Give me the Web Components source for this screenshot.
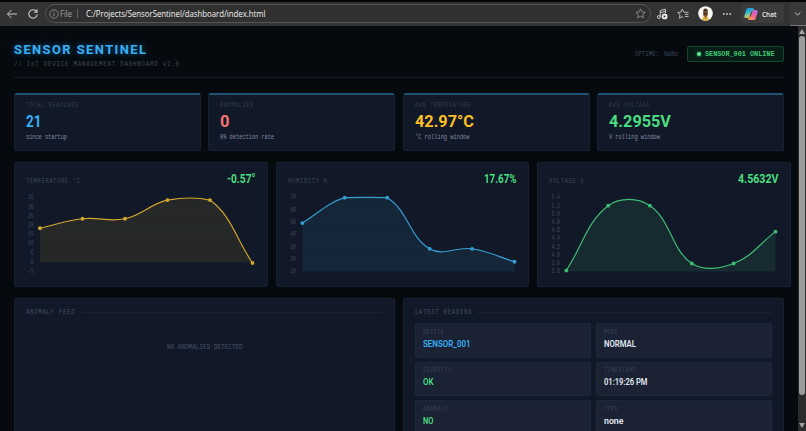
<!DOCTYPE html>
<html lang="en">
<head>
<meta charset="utf-8">
<title>Sensor Sentinel</title>
<style>
  html, body { margin:0; height:100%; overflow:hidden; background:#060a0f; }
  sensor-app {
    --cyan:#38b0f5; --red:#f87171; --amber:#fbbf24; --green:#4ade80;
    --card:#111827; --line:#152331; --cell:#1a2234;
    --mono:"Liberation Mono", monospace;
    --display:Roboto, "Liberation Sans", sans-serif;
  }
</style>
</head>
<body>
<sensor-app></sensor-app>

<script>
const attach = (el, html) => {
  const template = document.createElement('template')
  template.innerHTML = html
  el.attachShadow({mode:'open'}).appendChild(template.content.cloneNode(true))
}

class BrowserBar extends HTMLElement {
  constructor(){
    super()
    attach(this, `
    <style>
    :host{
        display:flex;
        align-items:center;
        box-sizing:border-box;
        height:26px;
        padding-left:6px;
        border-top:2px solid #050505;
        background:#333;
        color:#ddd;
        font-family:"Open Sans","Noto Sans",sans-serif;
        font-size:8.500px;
    }
    svg{ display:block; flex:none; fill:none; stroke:#c9c9c9; }
    .reload{ margin-left:9px; }
    .address{
        display:flex;
        align-items:center;
        box-sizing:border-box;
        width:606px;
        height:19px;
        margin-left:5.5px;
        padding:0 4px 0 3px;
        border:1px solid #555;
        border-radius:10px;
        background:#303030;
    }
    .address, .tools, .chat{ position:relative; top:-.5px; }
    .file{ margin-left:1px; color:#a2a2a2; }
    .sep{ width:1px; height:9px; margin:0 8px 0 5px; background:#666; }
    .url{ color:#f2f2f2; font-size:9px; }
    .star{ margin-left:auto; }
    .tools{ display:flex; align-items:center; gap:9px; margin-left:5px; }
    .chat{
        display:flex;
        align-items:center;
        gap:4px;
        box-sizing:border-box;
        width:43px;
        height:19px;
        margin-left:9px;
        padding-left:3px;
        border-radius:3px;
        background:#3b3b3b;
        color:#eee;
        font-weight:600;
        font-size:7.500px;
    }
    .more{
        display:flex;
        align-items:center;
        box-sizing:border-box;
        width:16px;
        height:24px;
        margin-left:auto;
        padding-left:2.5px;
        background:#3a3a3a;
        border-bottom:1px solid #777;
    }
    </style>
    <svg width="12" height="12" viewBox="0 0 12 12" stroke-width="1"><path d="M11 6H1.5M5.5 2 1.5 6l4 4"/></svg>
    <svg class="reload" width="12" height="12" viewBox="0 0 12 12" stroke-width="1.1"><path d="M9.8 4.1A4.2 4.2 0 1 0 10.2 6.4M10 1.3v3H7"/></svg>
    <div class="address">
        <svg width="10" height="10" viewBox="0 0 10 10" stroke="#999" stroke-width=".8"><circle cx="5" cy="5" r="4.2" stroke="#999"/><path stroke="#aaa" d="M5 4.4v3M5 2.5v.9"/></svg>
        <fit-text class="file" w="12">File</fit-text>
        <span class="sep"></span>
        <fit-text class="url" w="179.5">C:/Projects/SensorSentinel/dashboard/index.html</fit-text>
        <svg class="star" width="11" height="11" viewBox="0 0 12 12" style="stroke:#999" stroke-width=".9"><path d="M6 1l1.5 3.2 3.5.5-2.6 2.4.7 3.6L6 9 2.9 10.7l.7-3.6L1 4.700l3.500-.5z"/></svg>
    </div>
    <div class="tools">
        <svg width="12" height="12" viewBox="0 0 12 12" stroke-width="1"><path d="M4.300 9V2.500L9.500 1.200V5M4.300 4.700l5-1.300"/><circle cx="2.900" cy="9" r="1.500"/><circle cx="8.600" cy="8.400" r="2.900" fill="#eee" stroke="none"/><path d="M7.700 7v2.800L10 8.400z" fill="#333" stroke="none"/></svg>
        <svg width="12" height="12" viewBox="0 0 12 12" stroke-width=".9"><path d="M7 4.300 5.300 1.200 3.900 4.100.8 4.600 3 6.900l-.5 3.300L5.300 8.700l1 .6M7.200 4.300H11.500M8 6.400h3.500M8 8.500h3.500"/></svg>
        <svg width="15" height="15" viewBox="0 0 15 15" stroke="none"><g stroke="none"><circle cx="7.500" cy="7.500" r="7.300" fill="#f8f8f4"/><path d="M4.300 14c.2-2.700 1-4 3.200-4s3 1.300 3.200 4a7.300 7.300 0 0 1-6.400 0z" fill="#e0b53f"/><rect x="5.300" y="2.600" width="4.400" height="8" rx="2.200" fill="#4a2d1c"/><path d="M6.200 5.500h2.600v1.200H6.200z" fill="#8f6847"/><path d="M6.500 8.500h2l-.5 4h-1z" fill="#9a642c"/></g></svg>
        <svg width="10" height="12" viewBox="0 0 10 12"><g fill="#ccc" stroke="none"><circle cx="1.800" cy="6" r=".9"/><circle cx="5" cy="6" r=".9"/><circle cx="8.200" cy="6" r=".9"/></g></svg>
    </div>
    <div class="chat">
        <svg width="14" height="14" viewBox="0 0 14 14">
            <defs>
                <linearGradient id="a" x1="0" y1="0" x2=".3" y2="1"><stop offset="0" stop-color="#1784df"/><stop offset=".5" stop-color="#36b8d3"/><stop offset="1" stop-color="#ddd34a"/></linearGradient>
                <linearGradient id="b" x1="1" y1="0" x2=".3" y2="1"><stop offset="0" stop-color="#a86cf4"/><stop offset=".55" stop-color="#ee5e9b"/><stop offset="1" stop-color="#ff994e"/></linearGradient>
            </defs>
            <g stroke="none">
                <path d="M4 1h4.500c1 0 1.400.6 1.700 1.500L7.300 4.700 5.600 9.600C5.200 10.700 4.800 11 3.500 11H2C.5 11 0 10 .4 8.700L2.300 2.500C2.600 1.500 3.100 1 4 1z" fill="url(#a)"/>
                <path d="M10 13H5.500c-1 0-1.400-.6-1.700-1.500l2.900-2.200 1.700-4.900C8.800 3.300 9.200 3 10.500 3H12c1.500 0 2 1 1.600 2.300l-1.900 6.200C11.400 12.500 10.900 13 10 13z" fill="url(#b)"/>
            </g>
        </svg>
        <fit-text w="14.500">Chat</fit-text>
    </div>
    <div class="more"><svg width="9" height="9" viewBox="0 0 9 9" stroke-width="1"><path d="M2 3.500 4.700 6l2.700-2.500"/></svg></div>
    `)
  }
}

class ScrollRail extends HTMLElement {
  constructor(){
    super()
    attach(this, `
    <style>
    :host{
        display:flex;
        flex-direction:column;
        align-items:center;
        flex:none;
        box-sizing:border-box;
        width:8px;
        height:100%;
        padding:3px 0;
        background:#2c2c2c;
    }
    svg{ display:block; fill:#a3a3a3; }
    .thumb{ width:5.500px; height:359px; margin:2px 0 auto; border-radius:3px; background:#9d9d9d; }
    </style>
    <svg width="6" height="5"><path d="M3 0 6 5H0z"/></svg>
    <div class="thumb"></div>
    <svg width="6" height="5"><path d="M3 5 6 0H0z"/></svg>
    `)
  }
}

class DashHeader extends HTMLElement {
  constructor(){
    super()
    attach(this, `
    <style>
    :host{
        display:flex;
        justify-content:space-between;
        box-sizing:border-box;
        height:52px;
        padding-top:16px;
        border-bottom:1px solid #111d29;
        font-family:var(--mono);
    }
    .title{
        height:15px;
        font:bold 13.500px/15px var(--display);
        letter-spacing:1.500px;
        color:var(--cyan);
        text-shadow:0 0 7px #1581c8aa;
    }
    .sub{ margin-top:2px; height:10px; line-height:10px; font-size:7.500px; color:#414c59; letter-spacing:1px; }
    .right{ display:flex; align-items:center; height:16px; margin-top:4px; font-size:7.500px; }
    .uptime{ margin-right:5px; color:#38465a; }
    .nan{ margin-right:9px; color:#38465a; }
    .status{
        display:flex;
        align-items:center;
        box-sizing:border-box;
        width:97px;
        height:16px;
        padding-left:8.500px;
        border:1px solid #134628;
        border-radius:2px;
        background:#081c18;
        color:#40c873;
        font-weight:bold;
    }
    .dot{ width:4px; height:4px; margin-right:4.500px; border-radius:50%; background:#5cea91; box-shadow:0 0 3px #22c55e; }
    </style>
    <div>
        <fit-text class="title" w="132">SENSOR SENTINEL</fit-text>
        <fit-text class="sub" w="165">// IoT DEVICE MANAGEMENT DASHBOARD v1.0</fit-text>
    </div>
    <div class="right">
        <fit-text class="uptime" w="24">UPTIME:</fit-text>
        <fit-text class="nan" w="14">NaNs</fit-text>
        <div class="status"><span class="dot"></span><fit-text w="69.500">SENSOR_001 ONLINE</fit-text></div>
    </div>
    `)
  }
}

class StatCard extends HTMLElement {
  constructor(){
    super()
    const a = name => this.getAttribute(name)
    attach(this, `
    <style>
    :host{
        display:flex;
        flex-direction:column;
        box-sizing:border-box;
        height:58px;
        padding:7px 11px 0;
        border:1px solid var(--line);
        border-top:0;
        border-radius:2px;
        background:linear-gradient(#1d5272 1.500px, var(--card) 2px);
        font-family:var(--mono);
        font-size:7px;
    }
    .label{ height:9px; line-height:9px; margin-top:1px; letter-spacing:1px; color:#344153; }
    .value{ height:20px; margin-top:1px; font:bold 17px/20px var(--display); color:var(--${a('tone')}); }
    .note{ height:9px; line-height:9px; margin-top:2px; color:#8190a5; }
    </style>
    <fit-text class="label" w="${a('lw')}">${a('label')}</fit-text>
    <fit-text class="value" w="${a('vw')}">${a('value')}</fit-text>
    <fit-text class="note" w="${a('nw')}">${a('note')}</fit-text>
    `)
  }
}

class LineChart extends HTMLElement {
  constructor(){
    super()
    const a = name => this.getAttribute(name)
    const values = a('values').split(',').map(Number)
    const ticks = a('ticks').split(',')
    const max = Number(ticks[0]), min = Number(ticks[ticks.length - 1])
    const left = Number(a('left')), right = 237.500, top = 7.300, bottom = 81.200
    const y = v => top + (max - v) / (max - min) * (bottom - top)
    const pts = values.map((v, i) => [left + i * (right - left) / (values.length - 1), y(v)])
    const line = this.curve(pts, top, bottom)
    const base = y(Math.max(0, min))
    attach(this, `
    <style>
    :host{
        display:block;
        box-sizing:border-box;
        height:125px;
        border:1px solid var(--line);
        border-radius:2px;
        background:var(--card);
        font-family:var(--mono);
        overflow:hidden;
    }
    .head{
        display:flex;
        justify-content:space-between;
        box-sizing:border-box;
        height:27px;
        padding:6px 11.500px 0 11px;
    }
    .label{ height:10px; line-height:10px; margin-top:6.500px; font-size:7.500px; letter-spacing:1px; color:#3e4a5b; }
    .value{ height:18px; font:bold 12.500px/19px var(--display); color:var(--green); }
    svg{ display:block; }
    text{ font-size:6.500px; fill:#3f4c5f; }
    </style>
    <div class="head">
        <fit-text class="label" w="${a('lw')}">${a('label')}</fit-text>
        <fit-text class="value" w="${a('vw')}">${a('value')}</fit-text>
    </div>
    <svg width="252" height="96" viewBox="0 0 252 96">
        ${ticks.map(t => `
        <path d="M${left - 5} ${y(Number(t))}H${right}" stroke="#162231" stroke-width=".6"/>
        <text x="${left - 6.500}" y="${y(Number(t)) + 2}" text-anchor="end" textLength="${t.length * 2.800}" lengthAdjust="spacingAndGlyphs">${t}</text>`).join('')}
        <path d="${line}L${right} ${base}H${left}z" fill="var(--stroke)" fill-opacity=".11"/>
        <path d="${line}" fill="none" stroke="var(--stroke)" stroke-width="1.150"/>
        ${pts.map(p => `<circle cx="${p[0]}" cy="${p[1]}" r="1.900" fill="var(--stroke)"/>`).join('')}
    </svg>
    `)
  }

  // spline with tension 0.4, control points kept inside the plot
  curve(pts, top, bottom){
    const clamp = v => Math.min(bottom, Math.max(top, v))
    const ctrl = pts.map((p, i) => {
      const prev = pts[i - 1] || p, next = pts[i + 1] || p
      const d0 = Math.hypot(p[0] - prev[0], p[1] - prev[1])
      const d1 = Math.hypot(next[0] - p[0], next[1] - p[1])
      const f0 = .4 * d0 / (d0 + d1), f1 = .4 * d1 / (d0 + d1)
      const dx = next[0] - prev[0], dy = next[1] - prev[1]
      return {
        before:[p[0] - f0 * dx, clamp(p[1] - f0 * dy)],
        after:[p[0] + f1 * dx, clamp(p[1] + f1 * dy)]
      }
    })
    return 'M' + pts[0] + pts.slice(1).map((p, i) => `C${ctrl[i].after} ${ctrl[i + 1].before} ${p}`).join('')
  }
}

class DashPanel extends HTMLElement {
  constructor(){
    super()
    attach(this, `
    <style>
    :host{
        display:block;
        box-sizing:border-box;
        height:180px;
        padding:8px 11px;
        border:1px solid var(--line);
        border-radius:2px;
        background:var(--card);
        font-family:var(--mono);
        font-size:7.500px;
    }
    .head{ display:flex; align-items:center; gap:6px; height:10px; line-height:10px; color:#445166; letter-spacing:1px; }
    .rule{ flex:1; height:1px; background:#162332; }
    </style>
    <div class="head"><fit-text w="${this.getAttribute('lw')}">${this.getAttribute('label')}</fit-text><span class="rule"></span></div>
    <slot></slot>
    `)
  }
}

class ReadingCell extends HTMLElement {
  constructor(){
    super()
    const a = name => this.getAttribute(name)
    attach(this, `
    <style>
    :host{
        display:flex;
        flex-direction:column;
        box-sizing:border-box;
        height:34.500px;
        padding:4.500px 7.500px 0;
        border:1px solid #1b2a3a;
        border-radius:2px;
        background:var(--cell);
        font-family:var(--mono);
    }
    .label{ height:8px; line-height:8px; font-size:6.500px; letter-spacing:1px; color:#3a4759; }
    .value{ height:12px; margin-top:1px; font:600 9px/12px var(--display); color:${a('tone') ? `var(--${a('tone')})` : '#e2e8f0'}; }
    </style>
    <fit-text class="label" w="${a('lw')}">${a('label')}</fit-text>
    <fit-text class="value" w="${a('vw')}">${a('value')}</fit-text>
    `)
  }
}

class SensorApp extends HTMLElement {
  constructor(){
    super()
    attach(this, `
    <style>
    :host{ display:flex; flex-direction:column; height:431px; overflow:hidden; }
    .view{ display:flex; flex:1; min-height:0; }
    .page{ flex:1; min-width:0; padding:0 14px; overflow:hidden; }
    .stats, .charts, .panels{ display:grid; gap:7.700px; }
    .stats{ grid-template-columns:repeat(4, 1fr); margin-top:14.500px; }
    .charts{ grid-template-columns:repeat(3, 253.800px); column-gap:7.900px; margin-top:11.500px; }
    .panels{ grid-template-columns:1fr 1fr; margin-top:11px; }
    .empty{ display:flex; justify-content:center; height:10px; line-height:10px; margin-top:24.500px; color:#46546a; }
    .readings{ display:grid; grid-template-columns:1fr 1fr; gap:4px 5px; margin-top:6px; }
    </style>
    <browser-bar></browser-bar>
    <div class="view">
        <div class="page">
            <dash-header></dash-header>
            <div class="stats">
                <stat-card label="TOTAL READINGS" lw="52" value="21" vw="15.500" note="since startup" nw="41" tone="cyan"></stat-card>
                <stat-card label="ANOMALIES" lw="33" value="0" vw="9.500" note="0% detection rate" nw="54" tone="red"></stat-card>
                <stat-card label="AVG TEMPERATURE" lw="56" value="42.97°C" vw="59" note="°C rolling window" nw="54.500" tone="amber"></stat-card>
                <stat-card label="AVG VOLTAGE" lw="40.500" value="4.2955V" vw="62" note="V rolling window" nw="51" tone="green"></stat-card>
            </div>
            <div class="charts">
                <line-chart style="--stroke:#d5a62b" label="TEMPERATURE °C" lw="54" value="-0.57°" vw="28.500" left="25" ticks="35,30,25,20,15,10,5,0,-5" values="18.250,23.400,23.400,33.500,33.500,-0.570"></line-chart>
                <line-chart style="--stroke:#359fd3" label="HUMIDITY %" lw="39" value="17.67%" vw="32.500" left="25.300" ticks="70,60,50,40,30,20,10" values="49.100,69.700,69.700,28.200,28.200,17.670"></line-chart>
                <line-chart style="--stroke:#3fbd75" label="VOLTAGE V" lw="34.500" value="4.5632V" vw="40.500" left="28.300" ticks="5.4,5.2,5.0,4.8,4.6,4.4,4.2,4.0,3.8,3.6" values="3.617,5.195,5.195,3.788,3.788,4.563"></line-chart>
            </div>
            <div class="panels">
                <dash-panel label="ANOMALY FEED" lw="48.500">
                    <div class="empty"><fit-text w="75.500">NO ANOMALIES DETECTED</fit-text></div>
                </dash-panel>
                <dash-panel label="LATEST READING" lw="56.500">
                    <div class="readings">
                        <reading-cell label="DEVICE" lw="21" value="SENSOR_001" vw="47.500" tone="cyan"></reading-cell>
                        <reading-cell label="MODE" lw="13.500" value="NORMAL" vw="32"></reading-cell>
                        <reading-cell label="SEVERITY" lw="28" value="OK" vw="10.500" tone="green"></reading-cell>
                        <reading-cell label="TIMESTAMP" lw="31.500" value="01:19:26 PM" vw="43.500"></reading-cell>
                        <reading-cell label="ANOMALY" lw="24.500" value="NO" vw="10.500" tone="green"></reading-cell>
                        <reading-cell label="TYPE" lw="13.500" value="none" vw="19.500"></reading-cell>
                    </div>
                </dash-panel>
            </div>
        </div>
        <scroll-rail></scroll-rail>
    </div>
    `)
  }
}

// condenses its text to the width given in w
class FitText extends HTMLElement {
  constructor(){
    super()
    attach(this, `
    <style>
    :host{ display:block; white-space:nowrap; }
    span{ display:inline-block; vertical-align:top; transform-origin:0 50%; }
    </style>
    <span><slot></slot></span>
    `)
  }

  connectedCallback(){
    const span = this.shadowRoot.querySelector('span')
    const w = Number(this.getAttribute('w'))
    const spacing = parseFloat(getComputedStyle(this).letterSpacing) || 0
    this.style.width = w + 'px'
    span.style.transform = `scaleX(${w / (span.getBoundingClientRect().width - spacing)})`
  }
}

window.customElements.define('sensor-app', SensorApp)
window.customElements.define('browser-bar', BrowserBar)
window.customElements.define('scroll-rail', ScrollRail)
window.customElements.define('dash-header', DashHeader)
window.customElements.define('stat-card', StatCard)
window.customElements.define('line-chart', LineChart)
window.customElements.define('dash-panel', DashPanel)
window.customElements.define('reading-cell', ReadingCell)
window.customElements.define('fit-text', FitText)
</script>
</body>
</html>
